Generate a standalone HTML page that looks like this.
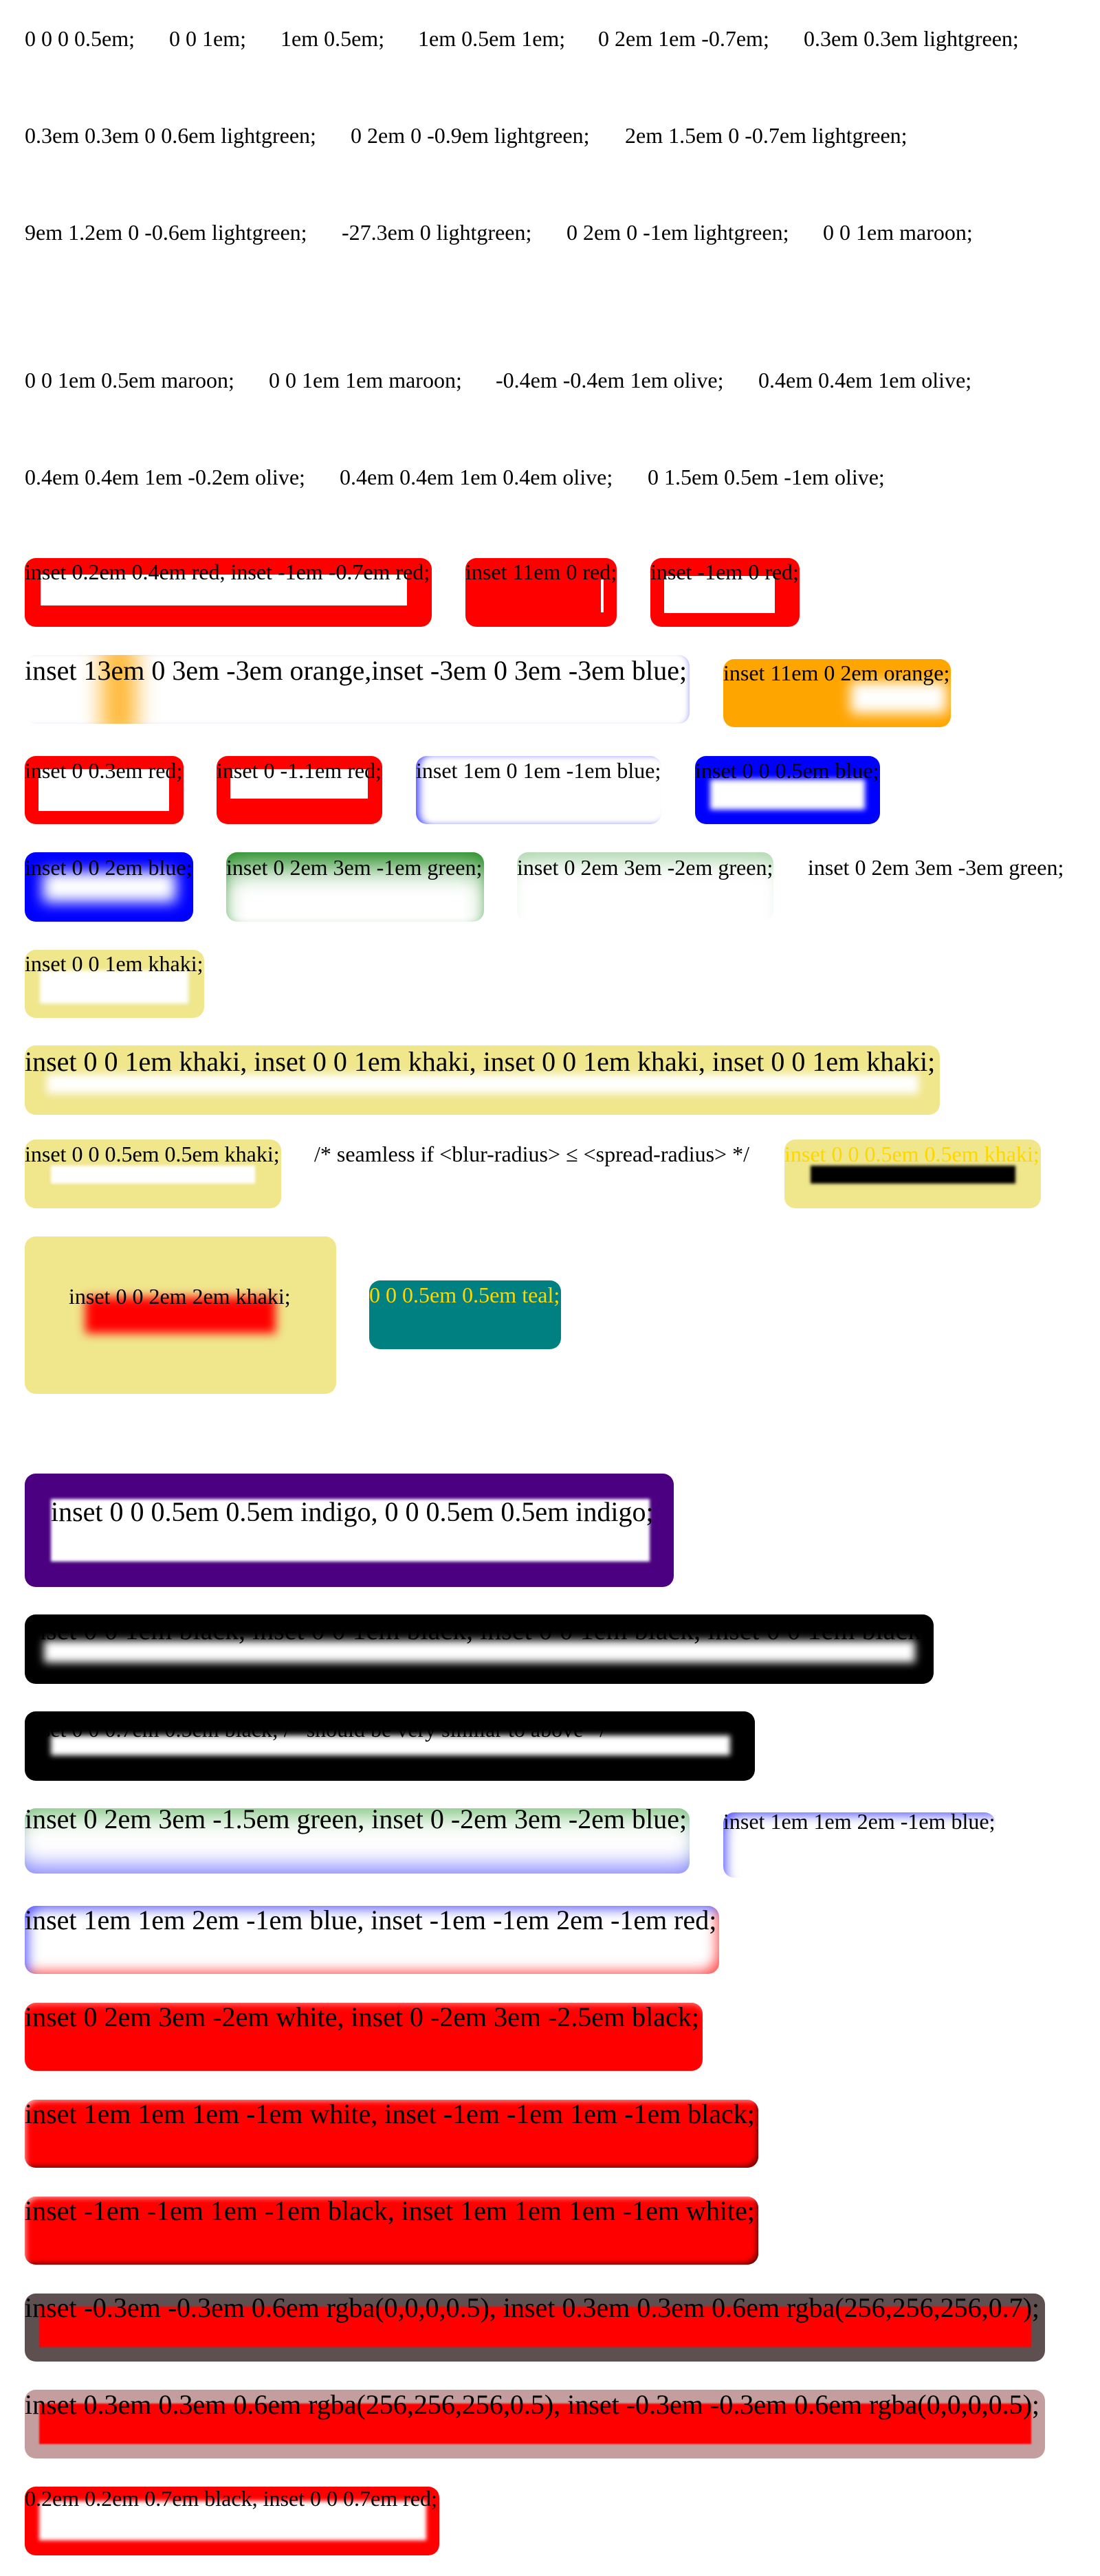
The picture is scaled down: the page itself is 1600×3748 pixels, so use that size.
<!DOCTYPE html>
<html><head><meta charset="utf-8">
<style>
html,body{margin:0;padding:0;background:#fff;}
body{width:1600px;height:3748px;position:relative;overflow:hidden;font-family:"Liberation Serif",serif;}
.t{position:absolute;font-size:32px;line-height:1;white-space:nowrap;color:#000;z-index:2;}
.b{font-size:40px;}
.x{position:absolute;border-radius:16px;overflow:hidden;}
.i{position:absolute;background:#fff;}
</style></head><body>
<!-- top text rows -->
<div class="t" style="left:36px;top:40px">0 0 0 0.5em;</div>
<div class="t" style="left:246px;top:40px">0 0 1em;</div>
<div class="t" style="left:408px;top:40px">1em 0.5em;</div>
<div class="t" style="left:608px;top:40px">1em 0.5em 1em;</div>
<div class="t" style="left:870px;top:40px">0 2em 1em -0.7em;</div>
<div class="t" style="left:1169px;top:40px">0.3em 0.3em lightgreen;</div>

<div class="t" style="left:36px;top:181px">0.3em 0.3em 0 0.6em lightgreen;</div>
<div class="t" style="left:510px;top:181px">0 2em 0 -0.9em lightgreen;</div>
<div class="t" style="left:909px;top:181px">2em 1.5em 0 -0.7em lightgreen;</div>

<div class="t" style="left:36px;top:322px">9em 1.2em 0 -0.6em lightgreen;</div>
<div class="t" style="left:497px;top:322px">-27.3em 0 lightgreen;</div>
<div class="t" style="left:824px;top:322px">0 2em 0 -1em lightgreen;</div>
<div class="t" style="left:1197px;top:322px">0 0 1em maroon;</div>

<div class="t" style="left:36px;top:537px">0 0 1em 0.5em maroon;</div>
<div class="t" style="left:391px;top:537px">0 0 1em 1em maroon;</div>
<div class="t" style="left:721px;top:537px">-0.4em -0.4em 1em olive;</div>
<div class="t" style="left:1103px;top:537px">0.4em 0.4em 1em olive;</div>

<div class="t" style="left:36px;top:678px">0.4em 0.4em 1em -0.2em olive;</div>
<div class="t" style="left:494px;top:678px">0.4em 0.4em 1em 0.4em olive;</div>
<div class="t" style="left:942px;top:678px">0 1.5em 0.5em -1em olive;</div>

<!-- Row A -->
<div class="x" style="left:36px;top:812px;width:592px;height:100px;background:red"><div class="i" style="left:23px;top:24px;width:533px;height:45px"></div></div>
<div class="t" style="left:36px;top:816px">inset 0.2em 0.4em red, inset -1em -0.7em red;</div>
<div class="x" style="left:677px;top:812px;width:220px;height:100px;background:red"><div class="i" style="left:197px;top:31px;width:4px;height:48px"></div></div>
<div class="t" style="left:677px;top:816px">inset 11em 0 red;</div>
<div class="x" style="left:946px;top:812px;width:217px;height:100px;background:red"><div class="i" style="left:20px;top:26px;width:161px;height:54px"></div></div>
<div class="t" style="left:946px;top:816px">inset -1em 0 red;</div>

<!-- Row B -->
<div class="x" style="left:36px;top:953px;width:967px;height:100px;background:#fff;box-shadow:inset -5px 0 8px -4px rgba(0,0,255,.35)"><div style="position:absolute;left:112px;top:-20px;width:50px;height:140px;background:#ffa500;opacity:.8;filter:blur(16px)"></div></div>
<div class="t b" style="left:36px;top:956px">inset 13em 0 3em -3em orange,inset -3em 0 3em -3em blue;</div>
<div class="x" style="left:1052px;top:959px;width:331px;height:99px;background:orange"><div class="i" style="left:185px;top:33px;width:140px;height:46px;filter:blur(9px)"></div></div>
<div class="t" style="left:1052px;top:963px">inset 11em 0 2em orange;</div>

<!-- Row C -->
<div class="x" style="left:36px;top:1100px;width:231px;height:99px;background:red"><div class="i" style="left:20px;top:19px;width:190px;height:61px"></div></div>
<div class="t" style="left:36px;top:1105px">inset 0 0.3em red;</div>
<div class="x" style="left:315px;top:1100px;width:241px;height:99px;background:red"><div class="i" style="left:20px;top:19px;width:200px;height:43px"></div></div>
<div class="t" style="left:315px;top:1105px">inset 0 -1.1em red;</div>
<div class="x" style="left:605px;top:1100px;width:357px;height:99px;background:#fff;box-shadow:inset 10px 0 12px -6px #33f,inset 0 6px 8px -6px rgba(0,0,255,.2),inset 0 -6px 8px -6px rgba(0,0,255,.2)"></div>
<div class="t" style="left:605px;top:1105px">inset 1em 0 1em -1em blue;</div>
<div class="x" style="left:1011px;top:1100px;width:269px;height:99px;background:blue"><div class="i" style="left:22px;top:34px;width:225px;height:44px;filter:blur(4px)"></div></div>
<div class="t" style="left:1011px;top:1105px">inset 0 0 0.5em blue;</div>

<!-- Row D -->
<div class="x" style="left:36px;top:1240px;width:245px;height:101px;background:blue"><div class="i" style="left:26px;top:28px;width:194px;height:45px;filter:blur(10px)"></div></div>
<div class="t" style="left:36px;top:1246px">inset 0 0 2em blue;</div>
<div class="x" style="left:329px;top:1240px;width:375px;height:101px;background:#fff;box-shadow:inset 0 34px 40px -14px #1f8a1f,inset 8px 0 14px -8px rgba(0,128,0,.3),inset -8px 0 14px -8px rgba(0,128,0,.3)"></div>
<div class="t" style="left:329px;top:1246px">inset 0 2em 3em -1em green;</div>
<div class="x" style="left:752px;top:1240px;width:373px;height:101px;background:#fff;box-shadow:inset 0 30px 30px -18px rgba(0,128,0,.35)"></div>
<div class="t" style="left:752px;top:1246px">inset 0 2em 3em -2em green;</div>
<div class="t" style="left:1175px;top:1246px">inset 0 2em 3em -3em green;</div>

<!-- Row E -->
<div class="x" style="left:36px;top:1382px;width:261px;height:99px;background:#f0e68c"><div class="i" style="left:22px;top:30px;width:216px;height:48px;filter:blur(3px)"></div></div>
<div class="t" style="left:36px;top:1386px">inset 0 0 1em khaki;</div>

<!-- Row F -->
<div class="x" style="left:36px;top:1521px;width:1331px;height:101px;background:#f0e68c"><div class="i" style="left:32px;top:42px;width:1268px;height:28px;filter:blur(6px)"></div></div>
<div class="t b" style="left:36px;top:1525px">inset 0 0 1em khaki, inset 0 0 1em khaki, inset 0 0 1em khaki, inset 0 0 1em khaki;</div>

<!-- Row G -->
<div class="x" style="left:36px;top:1658px;width:373px;height:100px;background:#f0e68c"><div class="i" style="left:38px;top:38px;width:297px;height:26px;filter:blur(2px)"></div></div>
<div class="t" style="left:36px;top:1663px">inset 0 0 0.5em 0.5em khaki;</div>
<div class="t" style="left:457px;top:1663px">/* seamless if &lt;blur-radius&gt; ≤ &lt;spread-radius&gt; */</div>
<div class="x" style="left:1141px;top:1658px;width:373px;height:100px;background:#f0e68c"><div class="i" style="left:38px;top:38px;width:298px;height:26px;background:#000;filter:blur(2px)"></div></div>
<div class="t" style="left:1141px;top:1663px;color:#ffd700">inset 0 0 0.5em 0.5em khaki;</div>

<!-- Row H -->
<div class="x" style="left:36px;top:1799px;width:453px;height:229px;background:#f0e68c"><div class="i" style="left:88px;top:88px;width:277px;height:53px;background:red;filter:blur(7px)"></div></div>
<div class="t" style="left:100px;top:1870px">inset 0 0 2em 2em khaki;</div>
<div class="x" style="left:537px;top:1863px;width:279px;height:100px;background:teal"></div>
<div class="t" style="left:537px;top:1868px;color:#ffd700">0 0 0.5em 0.5em teal;</div>

<!-- Row I -->
<div class="x" style="left:36px;top:2144px;width:944px;height:165px;background:#4b0082"><div class="i" style="left:38px;top:37px;width:871px;height:91px;filter:blur(2px)"></div></div>
<div class="t b" style="left:74px;top:2180px">inset 0 0 0.5em 0.5em indigo, 0 0 0.5em 0.5em indigo;</div>

<!-- Row J -->
<div class="x" style="left:36px;top:2349px;width:1322px;height:101px;background:#000"><div class="i" style="left:28px;top:38px;width:1267px;height:32px;filter:blur(6px)"></div></div>
<div class="t b" style="left:36px;top:2352px">inset 0 0 1em black, inset 0 0 1em black, inset 0 0 1em black, inset 0 0 1em black;</div>

<!-- Row K -->
<div class="x" style="left:36px;top:2490px;width:1062px;height:101px;background:#000"><div class="i" style="left:38px;top:35px;width:988px;height:29px;filter:blur(4px)"></div></div>
<div class="t" style="left:36px;top:2500px">inset 0 0 0.7em 0.5em black; /* should be very similar to above */</div>

<!-- Row L -->
<div class="x" style="left:36px;top:2631px;width:967px;height:95px;background:#fff;box-shadow:inset 0 30px 34px -20px rgba(0,140,0,.55),inset 0 -28px 30px -16px rgba(60,60,255,.6)"></div>
<div class="t b" style="left:36px;top:2627px">inset 0 2em 3em -1.5em green, inset 0 -2em 3em -2em blue;</div>
<div class="x" style="left:1052px;top:2637px;width:396px;height:95px;background:#fff;box-shadow:inset 12px 12px 16px -8px #55f"></div>
<div class="t" style="left:1052px;top:2634px">inset 1em 1em 2em -1em blue;</div>

<!-- Row M -->
<div class="x" style="left:36px;top:2773px;width:1010px;height:99px;background:#fff;box-shadow:inset 12px 12px 18px -8px #55f,inset -12px -12px 18px -8px #f55"></div>
<div class="t b" style="left:36px;top:2774px">inset 1em 1em 2em -1em blue, inset -1em -1em 2em -1em red;</div>

<!-- Row N -->
<div class="x" style="left:36px;top:2914px;width:986px;height:99px;background:red;box-shadow:inset 0 8px 10px -6px rgba(255,255,255,.5)"></div>
<div class="t b" style="left:36px;top:2915px">inset 0 2em 3em -2em white, inset 0 -2em 3em -2.5em black;</div>

<!-- Row O -->
<div class="x" style="left:36px;top:3055px;width:1067px;height:99px;background:red;box-shadow:inset 6px 6px 8px -4px rgba(255,255,255,.6),inset -6px -6px 8px -4px #600"></div>
<div class="t b" style="left:36px;top:3056px">inset 1em 1em 1em -1em white, inset -1em -1em 1em -1em black;</div>

<!-- Row P -->
<div class="x" style="left:36px;top:3196px;width:1067px;height:99px;background:red;box-shadow:inset 6px 6px 8px -4px rgba(255,255,255,.6),inset -6px -6px 8px -4px #600"></div>
<div class="t b" style="left:36px;top:3197px">inset -1em -1em 1em -1em black, inset 1em 1em 1em -1em white;</div>

<!-- Row Q -->
<div class="x" style="left:36px;top:3337px;width:1484px;height:99px;background:#5e5050"><div class="i" style="left:21px;top:19px;width:1443px;height:59px;background:red;filter:blur(1px)"></div></div>
<div class="t b" style="left:36px;top:3338px">inset -0.3em -0.3em 0.6em rgba(0,0,0,0.5), inset 0.3em 0.3em 0.6em rgba(256,256,256,0.7);</div>

<!-- Row R -->
<div class="x" style="left:36px;top:3477px;width:1484px;height:100px;background:#c49e9e"><div class="i" style="left:21px;top:20px;width:1443px;height:59px;background:red;filter:blur(1px)"></div></div>
<div class="t b" style="left:36px;top:3479px">inset 0.3em 0.3em 0.6em rgba(256,256,256,0.5), inset -0.3em -0.3em 0.6em rgba(0,0,0,0.5);</div>

<!-- Row S -->
<div class="x" style="left:36px;top:3618px;width:603px;height:100px;background:red"><div class="i" style="left:21px;top:21px;width:563px;height:57px;filter:blur(3px)"></div></div>
<div class="t" style="left:36px;top:3619px">0.2em 0.2em 0.7em black, inset 0 0 0.7em red;</div>
</body></html>
